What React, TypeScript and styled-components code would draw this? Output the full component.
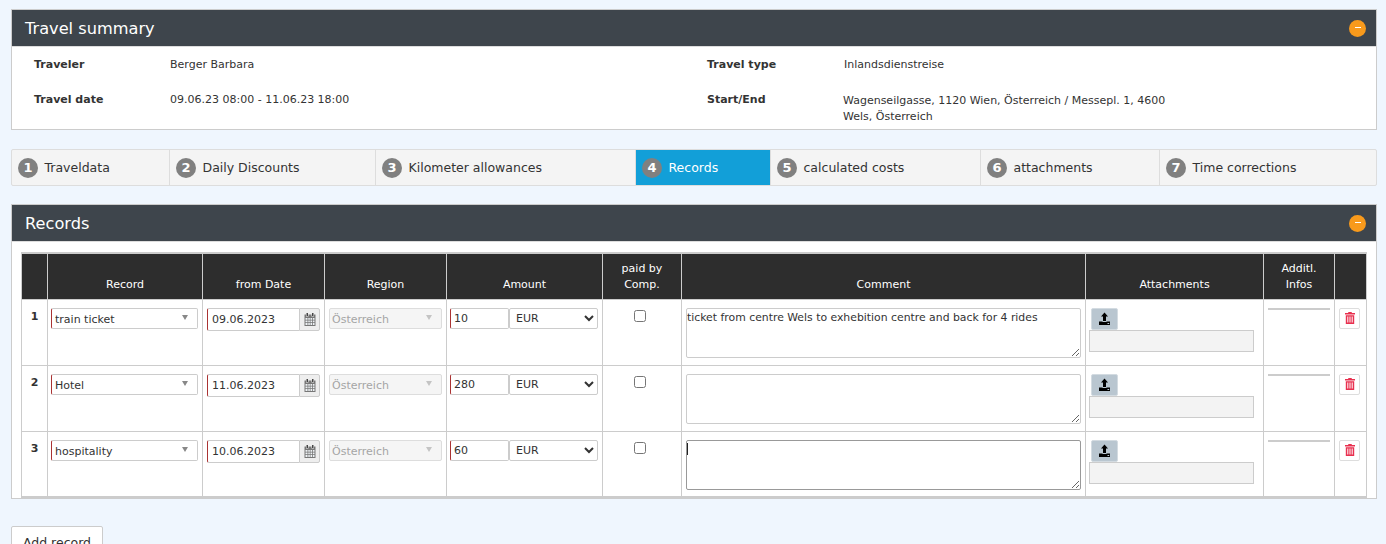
import React from "react";
import styled, { createGlobalStyle } from "styled-components";

const GlobalStyle = createGlobalStyle`
	html, body {
		margin: 0;
		height: 544px;
		overflow: hidden;
		background: #eff6fe;
	}
	body {
		font-family: "DejaVu Sans", Verdana, sans-serif;
		font-size: 11px;
		color: #333;
	}
	* {
		box-sizing: border-box;
	}
`;

const Page = styled.div`
	padding: 9px 9px 0 11px;
`;

const Panel = styled.section<{ $gap?: number }>`
	border: 1px solid #ccc;
	border-top: 0;
	background: #fff;
	margin-bottom: ${(p) => p.$gap ?? 0}px;
`;

const PanelHeader = styled.header`
	height: 38px;
	margin: 0 -1px;
	background: #3e454c;
	border: 1px solid #ccc;
	border-bottom-color: #ddd;
	padding: 0 10px 0 13px;
	display: flex;
	align-items: center;
	justify-content: space-between;
`;

const PanelTitle = styled.h2`
	margin: 0;
	font-size: 16.2px;
	font-weight: 400;
	color: #fff;
`;

const Collapse = styled.span`
	width: 17px;
	height: 17px;
	border-radius: 50%;
	background: #f89a1c;
	display: flex;
	align-items: center;
	justify-content: center;

	&::after {
		content: "";
		width: 6px;
		height: 1px;
		background: #fff;
		margin-top: -2px;
	}
`;

const SummaryGrid = styled.div`
	display: grid;
	grid-template-columns: 136px 537px 137px 330px;
	grid-template-rows: 35px 47px;
	padding: 11px 0 0 22px;
	height: 82px;
	font-size: 11px;
`;

const Label = styled.div`
	font-weight: 700;
	font-size: 11px;
`;

const Value = styled.div<{ $address?: boolean }>`
	line-height: 16px;
	margin-top: ${(p) => (p.$address ? 0 : -1)}px;
	margin-left: ${(p) => (p.$address ? -1 : 0)}px;
`;

const Tabs = styled.nav`
	display: grid;
	grid-template-columns: 158px 206px 260px 135px 210px 179px 218px;
	height: 37px;
	border: 1px solid #ddd;
	border-radius: 2px;
	background: #f4f4f4;
	margin-bottom: 18px;
`;

const Tab = styled.div<{ $active?: boolean }>`
	display: flex;
	align-items: center;
	gap: 6.5px;
	padding-left: 6px;
	font-size: 12.5px;
	color: ${(p) => (p.$active ? "#fff" : "#333")};
	background: ${(p) => (p.$active ? "#129fd8" : "transparent")};
	border-right: 1px solid #ddd;

	&:last-child {
		border-right: 0;
	}
`;

const TabNumber = styled.span`
	width: 20px;
	height: 20px;
	border-radius: 50%;
	background: #808080;
	color: #fff;
	font-weight: 700;
	font-size: 13px;
	display: flex;
	align-items: center;
	justify-content: center;
`;

const RecordsBody = styled.div`
	padding: 10px 9px 0;
`;

const Table = styled.table`
	border-collapse: collapse;
	table-layout: fixed;
	width: 1345px;
	font-size: 11px;
`;

const HeadCell = styled.th`
	height: 46px;
	background: #2d2d2d;
	color: #fff;
	font-size: 11px;
	font-weight: 400;
	line-height: 16px;
	vertical-align: bottom;
	text-align: center;
	padding: 0 4px 6px;
	border: 1px solid #ccc;
	border-top: 2px solid #ccc;
	border-bottom: 1px solid #ccc;
`;

const Cell = styled.td<{ $center?: boolean }>`
	vertical-align: top;
	padding: 8px 4px 0;
	height: 66px;
	border: 1px solid #ccc;
	text-align: ${(p) => (p.$center ? "center" : "left")};

	tr:last-child > & {
		border-bottom: 2px solid #ccc;
	}
`;

const RowNumber = styled.div`
	font-weight: 700;
	text-align: center;
	margin-top: 2px;
`;

const FakeSelect = styled.div<{ $disabled?: boolean }>`
	height: 21px;
	display: flex;
	align-items: center;
	justify-content: space-between;
	padding: 2px 9px 0 2px;
	font-size: 11px;
	border: 1px solid ${(p) => (p.$disabled ? "#ddd" : "#ccc")};
	border-left: 1px solid ${(p) => (p.$disabled ? "#ddd" : "#a33")};
	border-radius: 2px;
	color: ${(p) => (p.$disabled ? "#a5a5a5" : "#333")};
	background: ${(p) => (p.$disabled ? "#f5f5f5" : "#fff")};
`;

const RecordSelect = styled(FakeSelect)`
	margin-left: -1px;
	padding-left: 3px;
`;

const Caret = styled.span<{ $disabled?: boolean }>`
	width: 0;
	height: 0;
	margin-top: -3px;
	border-left: 3px solid transparent;
	border-right: 3px solid transparent;
	border-top: 5px solid ${(p) => (p.$disabled ? "#c4c4c4" : "#888")};
`;

const DateGroup = styled.div`
	display: flex;
	height: 23px;
`;

const DateInput = styled.input`
	width: 92px;
	height: 23px;
	border: 1px solid #ccc;
	border-left: 1px solid #a33;
	border-right: 0;
	border-radius: 2px 0 0 2px;
	padding: 1px 4px 0;
	font: 11px "DejaVu Sans", sans-serif;
	color: #333;
	background: #fff;
	outline: none;
`;

const CalendarAddon = styled.span`
	width: 21px;
	height: 23px;
	display: flex;
	align-items: center;
	justify-content: center;
	border: 1px solid #ccc;
	border-radius: 0 2px 2px 0;
	background: #eee;
	color: #777;
`;

const AmountGroup = styled.div`
	display: flex;
	height: 21px;
	margin-left: -1px;
`;

const AmountInput = styled.input`
	width: 59px;
	height: 21px;
	border: 1px solid #ccc;
	border-left: 1px solid #a33;
	border-radius: 2px;
	padding: 0 3px;
	font: 11px "DejaVu Sans", sans-serif;
	color: #333;
	outline: none;
`;

const CurrencySelect = styled.select`
	width: 90px;
	height: 21px;
	border: 1px solid #ccc;
	border-radius: 2px;
	padding: 0 0 0 2px;
	background: #fff;
	font: 11px "DejaVu Sans", sans-serif;
	color: #333;
	outline: none;
`;

const CheckBox = styled.input`
	margin: 2px 0 0 -5px;
	width: 12px;
	height: 12px;
`;

const CommentWrap = styled.div`
	position: relative;
	height: 50px;
`;

const Comment = styled.textarea<{ $focused?: boolean }>`
	display: block;
	width: 100%;
	height: 50px;
	padding: 1px 0;
	border: 1px solid ${(p) => (p.$focused ? "#999" : "#ccc")};
	border-radius: 2px;
	font: 10.85px/15px "DejaVu Sans", sans-serif;
	color: #333;
	outline: none;
`;

const TextCursor = styled.span`
	position: absolute;
	left: 1px;
	top: 3px;
	width: 1px;
	height: 12px;
	background: #222;
`;

const UploadButton = styled.span`
	display: flex;
	width: 27px;
	height: 22px;
	margin-left: 1px;
	align-items: center;
	justify-content: center;
	background: #b9c6d0;
	border: 1px solid #d3dbe1;
	border-radius: 2px;
	color: #000;
`;

const FileBox = styled.div`
	width: 165px;
	height: 22px;
	margin: 0 0 0 -1px;
	background: #f3f3f3;
	border: 1px solid #ccc;
`;

const InfoLine = styled.div`
	height: 2px;
	background: #ccc;
`;

const DeleteButton = styled.span`
	display: flex;
	width: 21px;
	height: 21px;
	align-items: center;
	justify-content: center;
	background: #fff;
	border: 1px solid #ddd;
	border-radius: 2px;
	color: #e8304f;
`;

const AddButton = styled.button`
	margin-top: 27px;
	height: 32px;
	width: 92px;
	padding: 0;
	background: #fff;
	border: 1px solid #ccc;
	border-radius: 2px;
	font: 12.5px "DejaVu Sans", sans-serif;
	color: #333;
`;

const CalendarIcon = () => (
	<svg width="12" height="13" viewBox="0 0 12 13" fill="currentColor">
		<path fill="#444" d="M2.500 0h1.500v3h-1.500zM8 0h1.500v3H8z" />
		<path d="M.5 1.500h1.500v2h2.500v-2h3v2H10v-2h1.500V13H.5z" />
		<path
			fill="#eef2f5"
			d="M1.500 5h2v1.700h-2zm2.800 0h1.500v1.700H4.300zm2.200 0H8v1.700H6.500zm2.300 0h1.700v1.700H8.800zM1.500 7.500h2v1.700h-2zm2.800 0h1.500v1.700H4.300zm2.200 0H8v1.700H6.500zm2.300 0h1.700v1.700H8.800zM1.500 10h2v2h-2zm2.800 0h1.500v2H4.300zm2.200 0H8v2H6.500zm2.300 0h1.700v2H8.800z"
		/>
	</svg>
);

const UploadIcon = () => (
	<svg width="13" height="13" viewBox="0 0 13 13" fill="currentColor">
		<path d="M6.500 .5 10 4.500H8V9H5V4.500H3z" />
		<path d="M1 9.500h3.500V10h4v-.5H12V13H1z" />
		<path fill="#b9c6d0" d="M9.500 11h1.700v1H9.500z" />
	</svg>
);

const TrashIcon = () => (
	<svg width="10" height="12" viewBox="0 0 10 12" fill="currentColor">
		<path d="M3.500 0h3l.5 1h3v1.500H0V1h3z" />
		<path d="M.8 3.200h8.400V12H.8zM2.300 4.500v6h1v-6zm2.200 0v6h1v-6zm2.200 0v6h1v-6z" fillRule="evenodd" />
	</svg>
);

const summary = [
	["Traveler", "Berger Barbara", "Travel type", "Inlandsdienstreise"],
	[
		"Travel date",
		"09.06.23 08:00 - 11.06.23 18:00",
		"Start/End",
		"Wagenseilgasse, 1120 Wien, Österreich / Messepl. 1, 4600 Wels, Österreich",
	],
];

const tabs = [
	"Traveldata",
	"Daily Discounts",
	"Kilometer allowances",
	"Records",
	"calculated costs",
	"attachments",
	"Time corrections",
];

const columns = [
	{ title: "", width: 26 },
	{ title: "Record", width: 155 },
	{ title: "from Date", width: 122 },
	{ title: "Region", width: 122 },
	{ title: "Amount", width: 156 },
	{ title: "paid by Comp.", width: 79 },
	{ title: "Comment", width: 404 },
	{ title: "Attachments", width: 178 },
	{ title: "Additl. Infos", width: 71 },
	{ title: "", width: 32 },
];

const records = [
	{
		id: 1,
		record: "train ticket",
		date: "09.06.2023",
		amount: "10",
		comment: "ticket from centre Wels to exhebition centre and back for 4 rides",
	},
	{ id: 2, record: "Hotel", date: "11.06.2023", amount: "280", comment: "" },
	{ id: 3, record: "hospitality", date: "10.06.2023", amount: "60", comment: "", focused: true },
];

const App: React.FC = () => {
	return (
		<Page>
			<GlobalStyle />
			<Panel $gap={19}>
				<PanelHeader>
					<PanelTitle>Travel summary</PanelTitle>
					<Collapse />
				</PanelHeader>
				<SummaryGrid>
					{summary.flat().map((text, index) =>
						index % 2 === 0 ? (
							<Label key={index}>{text}</Label>
						) : (
							<Value key={index} $address={index === 7}>
								{text}
							</Value>
						),
					)}
				</SummaryGrid>
			</Panel>

			<Tabs>
				{tabs.map((tab, index) => (
					<Tab key={tab} $active={index === 3}>
						<TabNumber>{index + 1}</TabNumber>
						{tab}
					</Tab>
				))}
			</Tabs>

			<Panel>
				<PanelHeader>
					<PanelTitle>Records</PanelTitle>
					<Collapse />
				</PanelHeader>
				<RecordsBody>
					<Table>
						<colgroup>
							{columns.map((col, index) => (
								<col key={index} width={col.width} />
							))}
						</colgroup>
						<thead>
							<tr>
								{columns.map((col, index) => (
									<HeadCell key={index}>{col.title}</HeadCell>
								))}
							</tr>
						</thead>
						<tbody>
							{records.map((row) => (
								<tr key={row.id}>
									<Cell>
										<RowNumber>{row.id}</RowNumber>
									</Cell>
									<Cell>
										<RecordSelect>
											{row.record}
											<Caret />
										</RecordSelect>
									</Cell>
									<Cell>
										<DateGroup>
											<DateInput value={row.date} readOnly />
											<CalendarAddon>
												<CalendarIcon />
											</CalendarAddon>
										</DateGroup>
									</Cell>
									<Cell>
										<FakeSelect $disabled>
											Österreich
											<Caret $disabled />
										</FakeSelect>
									</Cell>
									<Cell>
										<AmountGroup>
											<AmountInput value={row.amount} readOnly />
											<CurrencySelect defaultValue="EUR">
												<option>EUR</option>
											</CurrencySelect>
										</AmountGroup>
									</Cell>
									<Cell $center>
										<CheckBox type="checkbox" />
									</Cell>
									<Cell>
										<CommentWrap>
											<Comment $focused={row.focused} value={row.comment} readOnly />
											{row.focused && <TextCursor />}
										</CommentWrap>
									</Cell>
									<Cell>
										<UploadButton>
											<UploadIcon />
										</UploadButton>
										<FileBox />
									</Cell>
									<Cell>
										<InfoLine />
									</Cell>
									<Cell>
										<DeleteButton>
											<TrashIcon />
										</DeleteButton>
									</Cell>
								</tr>
							))}
						</tbody>
					</Table>
				</RecordsBody>
			</Panel>

			<AddButton>Add record</AddButton>
		</Page>
	);
};

export default App;
